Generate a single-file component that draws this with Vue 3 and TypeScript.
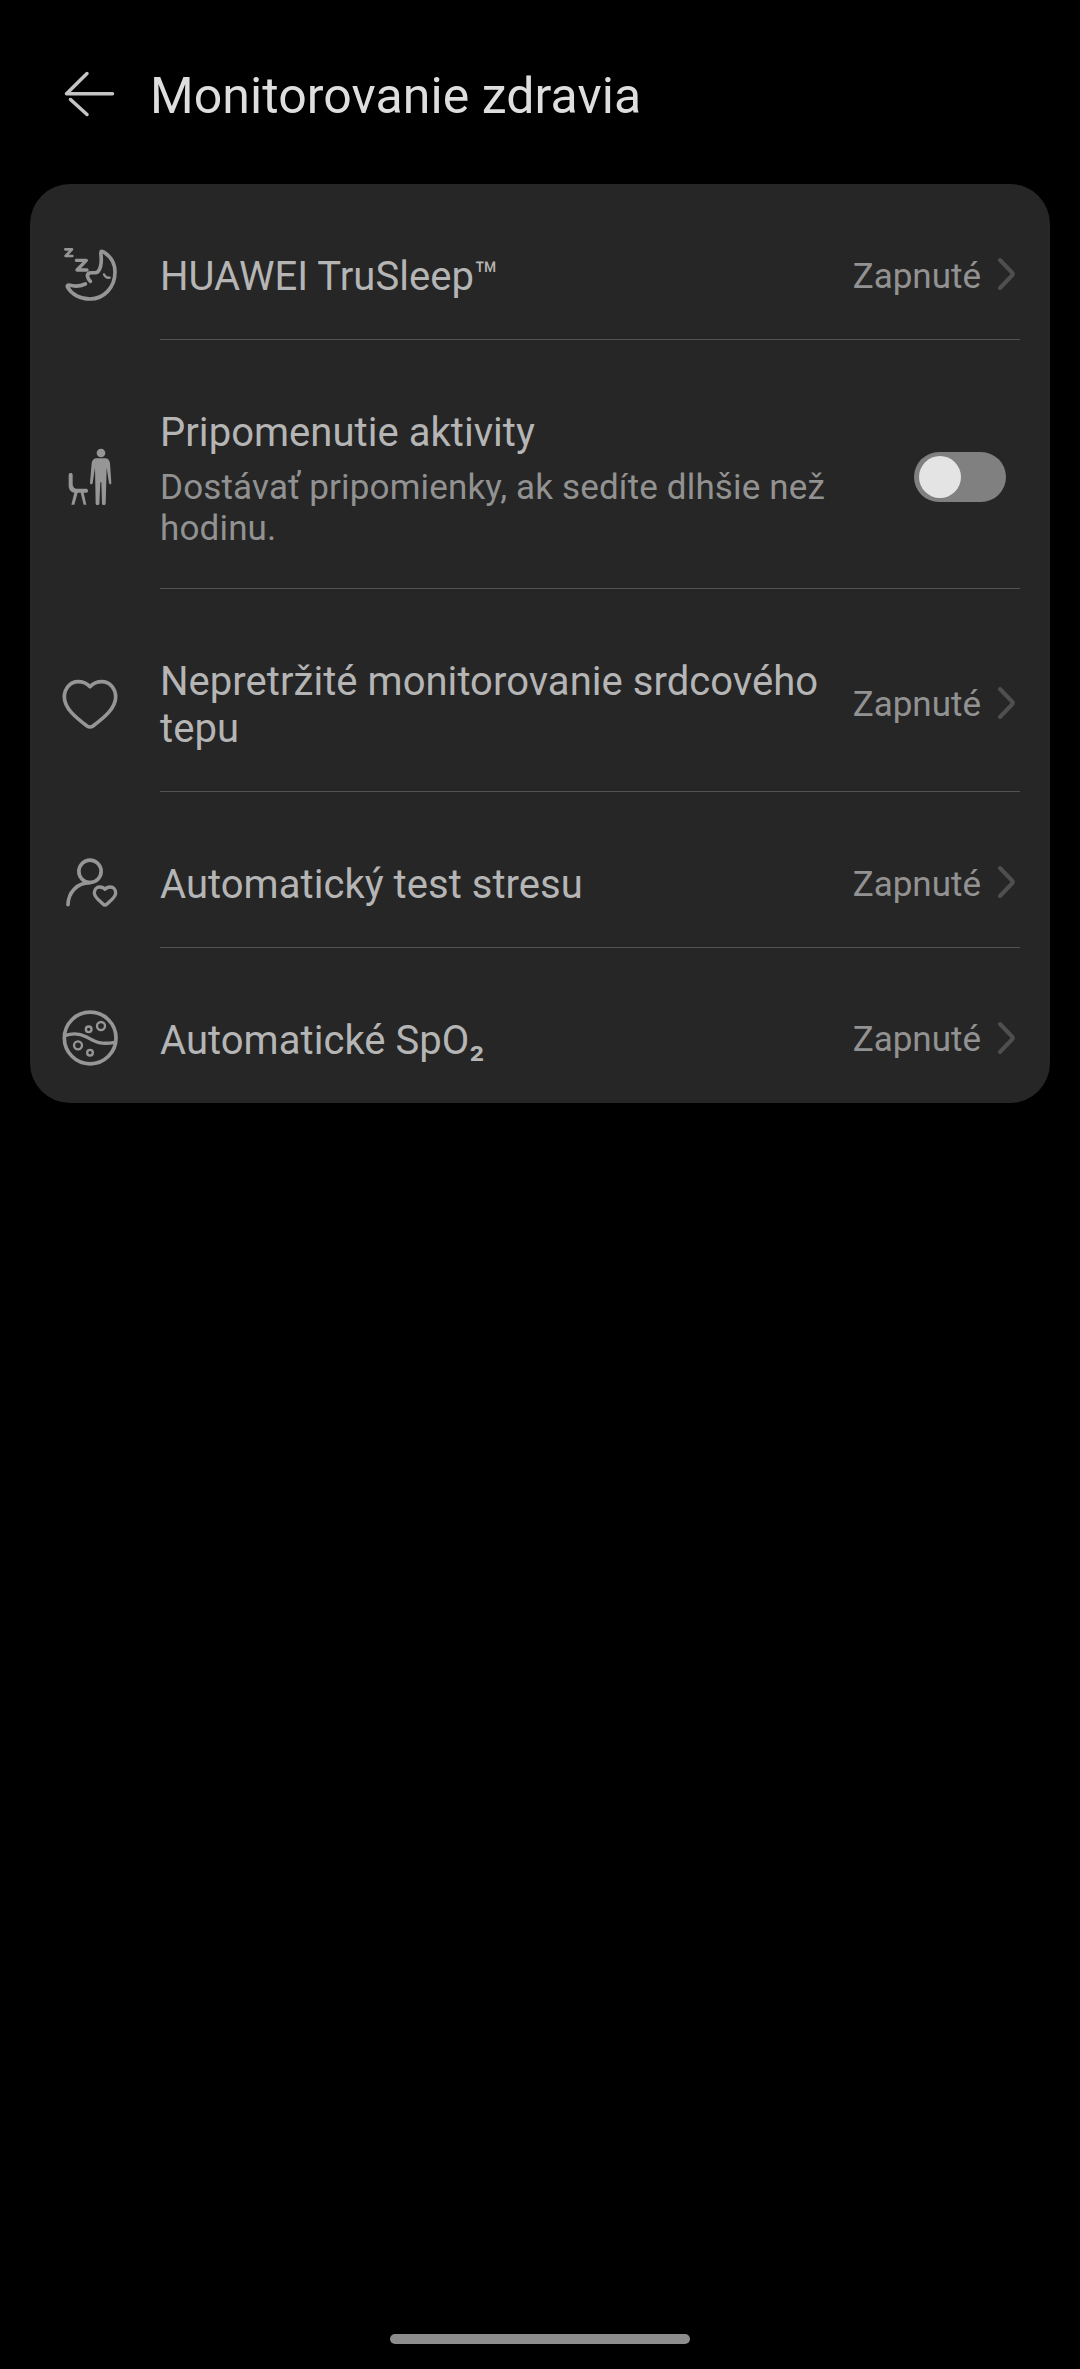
<script setup lang="ts">
type IconName = 'sleep' | 'activity' | 'heart' | 'stress' | 'spo2'

interface Row {
  icon: IconName
  viewBox: string
  title: string
  subscript?: string
  sub?: string
  value?: string
}

const rows: Row[] = [
  { icon: 'sleep', viewBox: '0 -3 240 240', title: 'HUAWEI TruSleep™', value: 'Zapnuté' },
  {
    icon: 'activity',
    viewBox: '0 6 240 240',
    title: 'Pripomenutie aktivity',
    sub: 'Dostávať pripomienky, ak sedíte dlhšie než hodinu.',
  },
  { icon: 'heart', viewBox: '0 -6 240 240', title: 'Nepretržité monitorovanie srdcového tepu', value: 'Zapnuté' },
  { icon: 'stress', viewBox: '0 -9 240 240', title: 'Automatický test stresu', value: 'Zapnuté' },
  { icon: 'spo2', viewBox: '0 -6 240 240', title: 'Automatické SpO', subscript: '₂', value: 'Zapnuté' },
]
</script>

<template>
  <div class="screen">
    <header class="header">
      <svg class="back" viewBox="0 0 64 60">
        <path d="M58.500 33.700H12.500L33 13.500" />
        <path d="M16.500 39.500L33 54.500" />
      </svg>
      <h1>Monitorovanie zdravia</h1>
    </header>

    <main class="card">
      <section v-for="row in rows" :key="row.icon" class="row" :class="row.icon">
        <svg class="icon" :viewBox="row.viewBox">
          <g v-if="row.icon === 'sleep'">
            <path d="M46 43H66L47 63H67" stroke-width="8" />
            <path d="M79 76H109L81 105H111" stroke-width="10" />
            <path
              d="M121 139C113 130 108 118 118 114C127 111 140 117 145 109C155 94 155 78 153 60C152 50 153 47 159 50C181 63 195 84 195 111C195 158 161 192 120 192C91 192 65 178 53 157C51 152 52 149 60 151C76 155 92 153 106 147"
              stroke-width="11"
            />
            <path d="M162 118C165 126 170 129 179 128" stroke-width="7" />
          </g>
          <g v-else-if="row.icon === 'activity'" class="solid">
            <circle cx="153" cy="54" r="13" />
            <path
              d="M140 70H166C174 70 179 76 180 85L184 143C184 149 178 149 177 144L170 98L167 206C167 211 156 211 156 206L154 142H151L148 206C148 211 137 211 137 206L135 98L128 144C127 149 120 149 120 143L125 85C126 76 131 70 140 70Z"
            />
            <path
              d="M56 120C56 112 68 112 68 120V149C69 156 74 161 80 161H109C116 161 116 173 109 173H101L109 209H101L92 173H83L73 209H64L73 173C63 171 56 163 56 152Z"
            />
          </g>
          <path
            v-else-if="row.icon === 'heart'"
            d="M120 65C107 51 92 50 84 50C62 50 43 69 43 96C43 130 78 158 111 183Q120 189 129 183C162 158 197 130 197 96C197 69 178 50 156 50C148 50 133 51 120 65Z"
            stroke-width="11"
          />
          <g v-else-if="row.icon === 'stress'">
            <circle cx="120" cy="79" r="33.500" stroke-width="11" />
            <path d="M54 179C55 142 80 114 120 113" stroke-width="11" />
            <path
              d="M165 133C160 126 154 126 149 126C139 126 133 134 133 144C133 157 146 164 159 177Q165 183 171 177C184 164 197 157 197 144C197 134 191 126 181 126C176 126 170 126 165 133Z"
              stroke-width="10"
            />
          </g>
          <g v-else>
            <circle cx="120.500" cy="114" r="77.500" stroke-width="11" />
            <path d="M44 107C66 99 87 99 108 110C131 122 148 136 194 127" stroke-width="10" />
            <circle cx="153" cy="78" r="12" stroke-width="7" />
            <circle cx="116" cy="88" r="8.500" stroke-width="7" />
            <circle cx="84" cy="136" r="12" stroke-width="7" />
            <circle cx="120" cy="158" r="8.500" stroke-width="7" />
          </g>
        </svg>
        <div class="body">
          <div class="content">
            <div class="text">
              <div class="title">{{ row.title }}<span v-if="row.subscript" class="subscript">{{ row.subscript }}</span></div>
              <div v-if="row.sub" class="sub">{{ row.sub }}</div>
            </div>
            <template v-if="row.value">
              <span class="value">{{ row.value }}</span>
              <svg class="chevron" viewBox="0 0 20 36">
                <path d="M4 4L16 16.500Q17.500 18 16 19.500L4 32" />
              </svg>
            </template>
            <div v-else class="toggle"><span class="knob"></span></div>
          </div>
        </div>
      </section>
    </main>

    <div class="home"></div>
  </div>
</template>

<style>
html,
body {
  margin: 0;
  background: #000;
}
</style>

<style scoped>
.screen {
  display: flex;
  flex-direction: column;
  box-sizing: border-box;
  width: 1080px;
  height: 2369px;
  background: #000;
  font-family: Roboto, sans-serif;
}
.header {
  display: flex;
  align-items: flex-start;
  box-sizing: border-box;
  height: 184px;
  padding: 60px 0 0 54px;
}
.back {
  width: 64px;
  height: 60px;
  fill: none;
  stroke: #c4c4c4;
  stroke-width: 3.5;
  stroke-linecap: round;
  stroke-linejoin: round;
}
h1 {
  margin: 7px 0 0 32px;
  color: #dedede;
  font-size: 50px;
  font-weight: 400;
  line-height: 59px;
  letter-spacing: 0.08px;
}
.card {
  display: flex;
  flex-direction: column;
  margin: 0 30px;
  border-radius: 40px;
  background: #262626;
}
.row {
  display: flex;
  box-sizing: border-box;
  height: 156px;
  padding: 0 30px 0 20px;
}
.row.activity {
  height: 249px;
}
.row.heart {
  height: 203px;
}
.row.spo2 {
  height: 155px;
}
.icon {
  flex: none;
  align-self: center;
  width: 80px;
  height: 80px;
  margin-top: 24px;
  fill: none;
  stroke: #969696;
  stroke-linecap: round;
  stroke-linejoin: round;
}
.activity .icon,
.heart .icon {
  margin-top: 25px;
}
.solid {
  fill: #969696;
  stroke: none;
}
.body {
  flex: 1;
  display: flex;
  margin-left: 30px;
  border-bottom: 1px solid #525252;
}
.spo2 .body {
  border-bottom: 0;
}
.content {
  flex: 1;
  display: flex;
  align-items: center;
  padding-top: 25px;
}
.activity .content,
.heart .content {
  padding-top: 26px;
}
.text {
  flex: 1;
  padding-top: 4px;
}
.title {
  color: #b5b5b5;
  font-size: 40px;
  line-height: 47px;
  letter-spacing: 0.04px;
}
.subscript {
  font-weight: 500;
}
.sub {
  margin-top: 11px;
  color: #929292;
  font-size: 35px;
  line-height: 41px;
  letter-spacing: 0.16px;
}
.value {
  margin: 4px 15px 0 24px;
  color: #929292;
  font-size: 35px;
  line-height: 41px;
}
.heart .value,
.spo2 .value {
  margin-top: 2px;
}
.chevron {
  width: 20px;
  height: 36px;
  margin-right: 4px;
  fill: none;
  stroke: #4f4f4f;
  stroke-width: 4;
  stroke-linecap: round;
}
.toggle {
  display: flex;
  box-sizing: border-box;
  width: 92px;
  height: 50px;
  margin: 0 14px 0 20px;
  padding: 4px 5px;
  border-radius: 25px;
  background: #808080;
}
.knob {
  width: 42px;
  height: 42px;
  border-radius: 50%;
  background: #e4e4e4;
}
.home {
  width: 300px;
  height: 10px;
  margin: auto auto 25px;
  border-radius: 5px;
  background: #8d8d8d;
}
</style>
